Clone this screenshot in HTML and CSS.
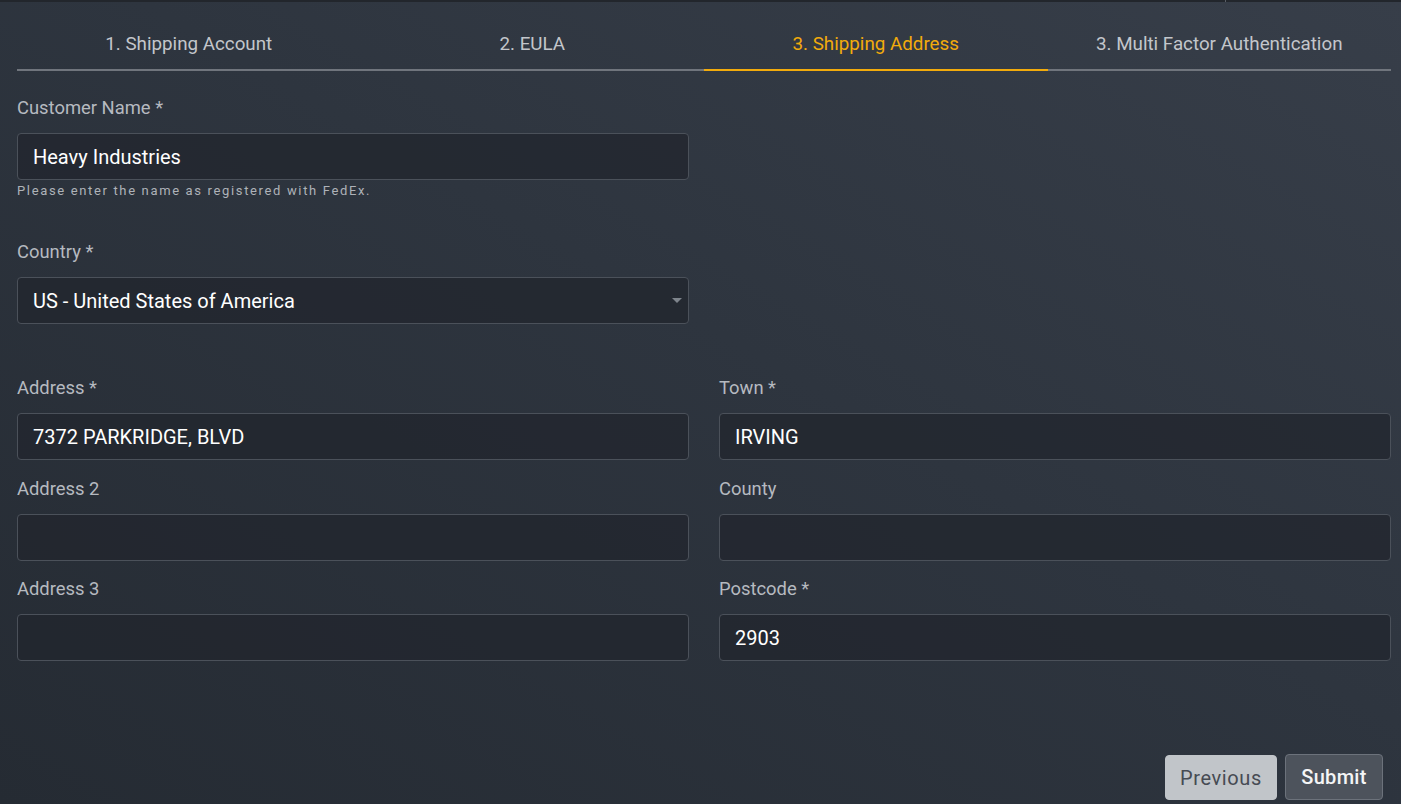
FILE: index.html
```html
<!DOCTYPE html>
<html lang="en">
<head>
    <meta charset="UTF-8">
    <meta name="viewport" content="width=device-width, initial-scale=1.0">
    <title>Shipping Address</title>
    <link rel="stylesheet" href="styles.css">
</head>
<body>
    <div class="topbar"><span class="topbar-split"></span></div>

    <div class="wizard">
        <div class="steps">
            <div class="step">1. Shipping Account</div>
            <div class="step">2. EULA</div>
            <div class="step active">3. Shipping Address</div>
            <div class="step">3. Multi Factor Authentication</div>
        </div>

        <form class="address-form">
            <div class="field field-name">
                <label>Customer Name *</label>
                <div class="input">Heavy Industries</div>
                <p class="help">Please enter the name as registered with FedEx.</p>
            </div>

            <div class="field field-country">
                <label>Country *</label>
                <div class="input select">
                    <span>US - United States of America</span>
                    <span class="caret"></span>
                </div>
            </div>

            <div class="address-grid">
                <div class="field">
                    <label>Address *</label>
                    <div class="input">7372 PARKRIDGE, BLVD</div>
                </div>
                <div class="field">
                    <label>Town *</label>
                    <div class="input">IRVING</div>
                </div>
                <div class="field">
                    <label>Address 2</label>
                    <div class="input"></div>
                </div>
                <div class="field">
                    <label>County</label>
                    <div class="input"></div>
                </div>
                <div class="field">
                    <label>Address 3</label>
                    <div class="input"></div>
                </div>
                <div class="field">
                    <label>Postcode *</label>
                    <div class="input">2903</div>
                </div>
            </div>

            <div class="actions">
                <button type="button" class="btn btn-light">Previous</button>
                <button type="button" class="btn btn-dark">Submit</button>
            </div>
        </form>
    </div>
</body>
</html>
```

FILE: styles.css
```css
* {
    margin: 0;
    padding: 0;
    box-sizing: border-box;
}

html, body {
    height: 100%;
}

body {
    font-family: Roboto, "Liberation Sans", sans-serif;
    background: linear-gradient(to bottom left, #373e49 0%, #2e353f 45%, #252b33 100%);
    color: #b6bac0;
    overflow: hidden;
}

/* thin strip left over from the parent window */
.topbar {
    height: 2px;
    background: #22262c;
    position: relative;
}

.topbar-split {
    position: absolute;
    left: 1225px;
    top: 0;
    width: 1px;
    height: 2px;
    background: #5a5f66;
}

.wizard {
    padding: 0 10px 0 17px;
}

/* Step tabs */
.steps {
    display: grid;
    grid-template-columns: repeat(4, 1fr);
}

.step {
    text-align: center;
    font-size: 18.8px;
    line-height: 24px;
    padding: 30px 0 13px;
    color: #c3c6cb;
    border-bottom: 2px solid #70757d;
}

.step.active {
    color: #f2ab0c;
    border-bottom-color: #f2ab0c;
}

/* Form */
.address-form {
    padding-top: 25px;
}

.field label {
    display: block;
    font-size: 18.4px;
    line-height: 24px;
    color: #b6bac0;
    margin-bottom: 13px;
}

.input {
    height: 47px;
    display: flex;
    align-items: center;
    padding: 0 15px;
    font-size: 20px;
    color: #fff;
    background: rgba(33, 38, 45, 0.75);
    border: 1px solid #4b515a;
    border-radius: 4px;
}

.field-name,
.field-country {
    width: 672px;
}

.field-name {
    margin-bottom: 40px;
}

.field-country {
    margin-bottom: 52px;
}

.help {
    margin-top: 2px;
    font-size: 13px;
    line-height: 18px;
    letter-spacing: 1.65px;
    color: #aeb2b8;
}

.select {
    justify-content: space-between;
}

.caret {
    width: 0;
    height: 0;
    margin-right: -9px;
    border-left: 5px solid transparent;
    border-right: 5px solid transparent;
    border-top: 5px solid #7e848c;
}

.address-grid {
    display: grid;
    grid-template-columns: 672px 672px;
    column-gap: 30px;
    row-gap: 16.5px;
}

/* Buttons */
.actions {
    display: flex;
    justify-content: flex-end;
    align-items: flex-end;
    gap: 8px;
    margin-top: 93px;
    padding-right: 8px;
}

.btn {
    font-family: Roboto, "Liberation Sans", sans-serif;
    font-size: 20px;
    border-radius: 4px;
    cursor: pointer;
}

.btn-light {
    width: 112px;
    height: 45px;
    background: #c1c5c9;
    color: #464b53;
    border: 1px solid #c1c5c9;
    letter-spacing: 0.6px;
}

.btn-dark {
    width: 98px;
    height: 46px;
    background: #4d535c;
    color: #f4f5f6;
    font-weight: 500;
    letter-spacing: 0.3px;
    border: 1px solid #6c727b;
}
```
